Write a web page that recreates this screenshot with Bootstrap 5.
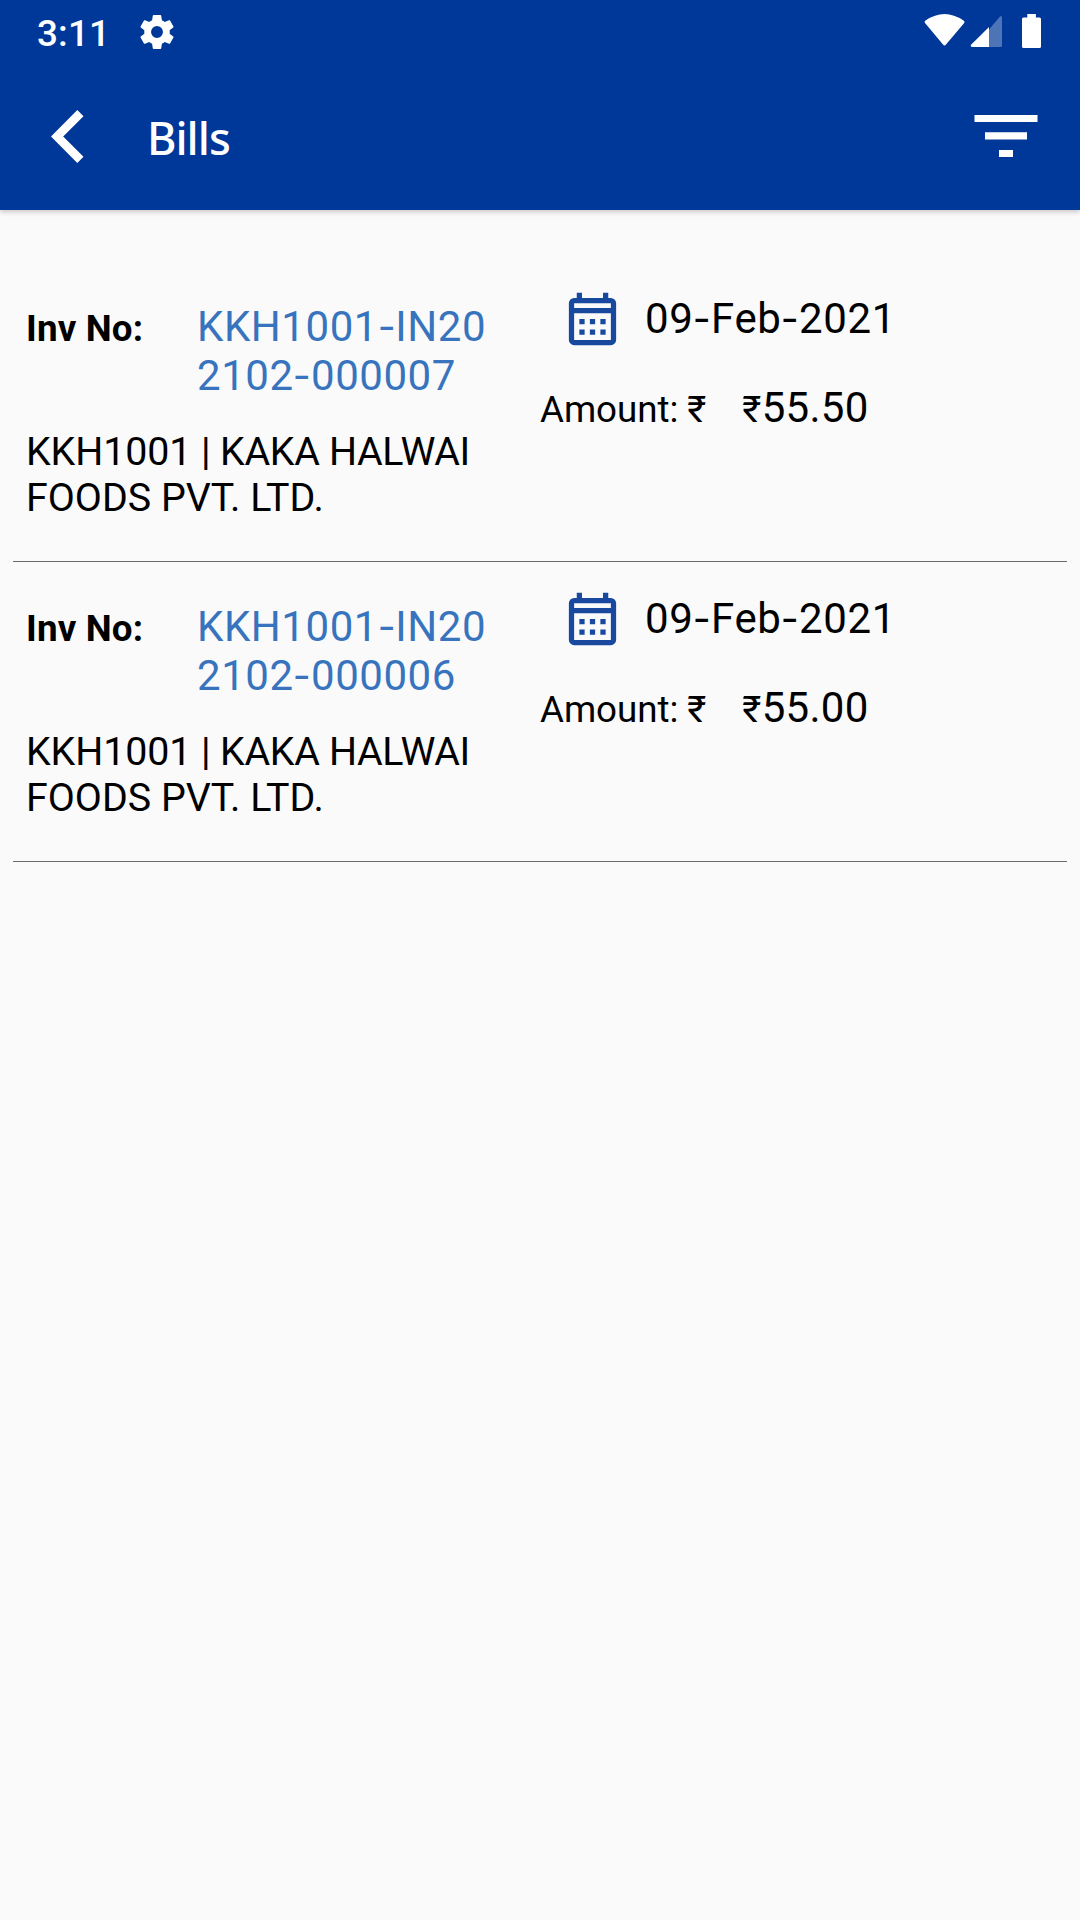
<!DOCTYPE html>
<html lang="en">
<head>
<meta charset="utf-8">
<meta name="viewport" content="width=device-width, initial-scale=1">
<title>Bills</title>
<link href="https://cdn.jsdelivr.net/npm/bootstrap@5.3.0/dist/css/bootstrap.min.css" rel="stylesheet">
<style>
  body { background: #fafafa; color: #000; font-family: Roboto, "Noto Sans", sans-serif; min-height: 1920px; }
  .app-header { background: #003899; height: 210px; box-shadow: 0 2px 5px rgba(0,0,0,.2); }
  .status-bar { height: 63px; padding: 0 38px 0 37px; }
  .clock { font-size: 36.75px; font-weight: 500; line-height: 43px; margin-top: 12px; letter-spacing: .2px; }
  .gear { margin: 15px 0 0 30px; }
  .status-icons { margin-top: 14px; }
  .title-bar { height: 147px; padding: 0 42px 0 51px; }
  .page-title { font-family: "Noto Sans", sans-serif; font-size: 45px; font-weight: 500; line-height: 62px; letter-spacing: -1px; margin: 44px 0 0 63px; }
  .back { margin-top: 47px; }
  .filter { margin-top: 52px; }
  .bill-list { padding: 52px 13px 0; }
  .bill { height: 300px; border-bottom: 1px solid #6a6a6a; }
  .bill-left { padding: 40px 0 0 13px; }
  .bill-right { padding: 28px 0 0; }
  .inv-label { font-size: 36.75px; font-weight: 700; line-height: 43px; letter-spacing: .15px; width: 171px; padding-top: 5px; }
  .inv-no { font-size: 42px; line-height: 49px; letter-spacing: .55px; color: #3874bd; }
  .customer { font-size: 39.375px; line-height: 46px; margin-top: 29px; }
  .cust-code { letter-spacing: -.1px; }
  .cust-name { letter-spacing: -.34px; }
  .dash { display: inline-block; margin: 0 2.6px; transform: scaleX(1.25); }
  .cal { margin-left: 21px; }
  .bill-date { font-size: 42px; line-height: 49px; letter-spacing: .65px; margin: 4px 0 0 21px; }
  .amount-label { font-size: 36.75px; line-height: 43px; letter-spacing: -.05px; }
  .amount-row { margin-top: 30px; }
  .amount-value { font-size: 42px; line-height: 49px; letter-spacing: .3px; margin-left: 36px; }
  .rupee { font-size: 36.75px; }
</style>
</head>
<body>
<header class="app-header text-white">
  <div class="status-bar d-flex align-items-start">
    <div class="clock">3:11</div>
    <svg class="gear" width="34" height="34" viewBox="2 2 20 20" fill="#fff"><path d="M19.43 12.98c.04-.32.07-.64.07-.98s-.03-.66-.07-.98l2.11-1.65c.19-.15.24-.42.12-.64l-2-3.46c-.12-.22-.39-.3-.61-.22l-2.49 1c-.52-.4-1.08-.73-1.69-.98l-.38-2.65A.49.49 0 0 0 14 2h-4c-.25 0-.46.18-.49.42l-.38 2.65c-.61.25-1.17.59-1.69.98l-2.49-1c-.23-.09-.49 0-.61.22l-2 3.46c-.13.22-.07.49.12.64l2.11 1.65c-.04.32-.07.65-.07.98s.03.66.07.98l-2.11 1.65c-.19.15-.24.42-.12.64l2 3.46c.12.22.39.3.61.22l2.49-1c.52.4 1.08.73 1.69.98l.38 2.65c.03.24.24.42.49.42h4c.25 0 .46-.18.49-.42l.38-2.65c.61-.25 1.17-.59 1.69-.98l2.49 1c.23.09.49 0 .61-.22l2-3.46c.12-.22.07-.49-.12-.64zM12 15.5a3.5 3.5 0 1 1 0-7 3.5 3.5 0 0 1 0 7z"/></svg>
    <svg class="status-icons ms-auto" width="118" height="34" viewBox="0 0 118 34" fill="#fff">
      <path d="M1.2 9.2Q-.2 7.8 1.5 6.5Q20.500-6.500 39.500 6.500Q41.200 7.800 40 9.200L22 30.600Q20.500 32.400 19 30.600Z"/>
      <path d="M78 3.500V31.500Q78 33 76.500 33H65V15.500L76 2.600Q78 1 78 3.500Z" opacity=".3"/>
      <path d="M65 13V33H48.500Q45.700 33 47.300 30.600Z"/>
      <path d="M103.300 0H111.900V3.600H115.500Q117 3.600 117 5.100V32.500Q117 34 115.500 34H99.500Q98 34 98 32.500V5.100Q98 3.600 99.500 3.600H103.300Z"/>
    </svg>
  </div>
  <div class="title-bar d-flex align-items-start">
    <svg class="back" width="33" height="53" viewBox="0 0 33 53" fill="#fff"><path d="M26.300 0 32.500 6.200 12.200 26.500 32.500 46.800 26.300 53 0 26.500Z"/></svg>
    <h1 class="page-title">Bills</h1>
    <svg class="filter ms-auto" width="64" height="43" viewBox="0 0 64 43" fill="#fff"><path d="M.5 0h63v7H.5zM11 17.200h42v7.300H11zM25 35h14v7H25z"/></svg>
  </div>
</header>

<main class="bill-list">
  <article class="bill row g-0">
    <div class="bill-left col-6">
      <div class="d-flex align-items-start">
        <div class="inv-label">Inv No:</div>
        <div class="inv-no">KKH1001<span class="dash">-</span>IN20<br>2102<span class="dash">-</span>000007</div>
      </div>
      <div class="customer"><span class="cust-code">KKH1001 | </span><span class="cust-name">KAKA HALWAI</span><br>FOODS PVT. LTD.</div>
    </div>
    <div class="bill-right col-6">
      <div class="d-flex align-items-start">
        <svg class="cal" width="63" height="63" viewBox="0 0 24 24" fill="#18499f"><path fill-rule="evenodd" d="M6 1h2v2h8V1h2v2h1a2 2 0 0 1 2 2v14a2 2 0 0 1-2 2H5a2 2 0 0 1-2-2V5a2 2 0 0 1 2-2h1zM5 5v1.900h14V5zM5 8.900V19h14V8.900zM7 11h2v2H7zM11 11h2v2h-2zM15 11h2v2h-2zM7 15h2v2H7zM11 15h2v2h-2zM15 15h2v2h-2z"/></svg>
        <div class="bill-date">09<span class="dash">-</span>Feb<span class="dash">-</span>2021</div>
      </div>
      <div class="amount-row d-flex align-items-baseline">
        <div class="amount-label">Amount: ₹</div>
        <div class="amount-value"><span class="rupee">₹</span>55.50</div>
      </div>
    </div>
  </article>

  <article class="bill row g-0">
    <div class="bill-left col-6">
      <div class="d-flex align-items-start">
        <div class="inv-label">Inv No:</div>
        <div class="inv-no">KKH1001<span class="dash">-</span>IN20<br>2102<span class="dash">-</span>000006</div>
      </div>
      <div class="customer"><span class="cust-code">KKH1001 | </span><span class="cust-name">KAKA HALWAI</span><br>FOODS PVT. LTD.</div>
    </div>
    <div class="bill-right col-6">
      <div class="d-flex align-items-start">
        <svg class="cal" width="63" height="63" viewBox="0 0 24 24" fill="#18499f"><path fill-rule="evenodd" d="M6 1h2v2h8V1h2v2h1a2 2 0 0 1 2 2v14a2 2 0 0 1-2 2H5a2 2 0 0 1-2-2V5a2 2 0 0 1 2-2h1zM5 5v1.900h14V5zM5 8.900V19h14V8.900zM7 11h2v2H7zM11 11h2v2h-2zM15 11h2v2h-2zM7 15h2v2H7zM11 15h2v2h-2zM15 15h2v2h-2z"/></svg>
        <div class="bill-date">09<span class="dash">-</span>Feb<span class="dash">-</span>2021</div>
      </div>
      <div class="amount-row d-flex align-items-baseline">
        <div class="amount-label">Amount: ₹</div>
        <div class="amount-value"><span class="rupee">₹</span>55.00</div>
      </div>
    </div>
  </article>
</main>
<script src="https://cdn.jsdelivr.net/npm/bootstrap@5.3.0/dist/js/bootstrap.bundle.min.js"></script>
</body>
</html>
